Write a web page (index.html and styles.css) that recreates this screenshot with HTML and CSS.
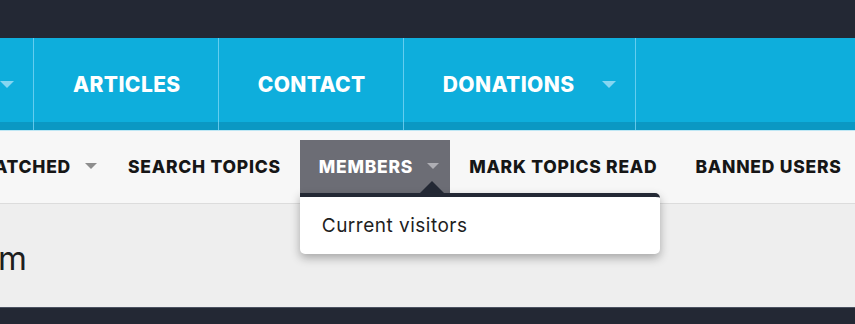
FILE: index.html
```html
<!DOCTYPE html>
<html lang="en">
<head>
<meta charset="utf-8">
<title>Forum</title>
<link rel="stylesheet" href="styles.css">
</head>
<body>
<div class="topbar"></div>
<nav class="mainnav">
  <div class="mainnav-item first"><span class="mainnav-label">FORUMS</span><span class="caret caret-blue"></span></div>
  <div class="mainnav-item"><span class="mainnav-label">ARTICLES</span></div>
  <div class="mainnav-item"><span class="mainnav-label">CONTACT</span></div>
  <div class="mainnav-item"><span class="mainnav-label">DONATIONS</span><span class="caret caret-blue"></span></div>
</nav>
<nav class="subnav">
  <div class="subnav-item first"><span>WATCHED</span><span class="caret caret-grey"></span></div>
  <div class="subnav-item"><span>SEARCH TOPICS</span></div>
  <div class="subnav-item active"><span>MEMBERS</span><span class="caret caret-light"></span>
    <div class="dropdown">
      <span class="dropdown-pointer"></span>
      <div class="dropdown-body"><span class="dropdown-link">Current visitors</span></div>
    </div>
  </div>
  <div class="subnav-item"><span>MARK TOPICS READ</span></div>
  <div class="subnav-item"><span>BANNED USERS</span></div>
</nav>
<main class="content">
  <div class="title-wrap"><h1 class="page-title">Forum</h1></div>
</main>
<footer class="footer"></footer>
</body>
</html>
```

FILE: styles.css
```css
* { box-sizing: border-box; }
html, body { margin: 0; padding: 0; }
body {
  width: 855px;
  height: 324px;
  overflow: hidden;
  background: #232834;
  font-family: "Inter", "Noto Sans", sans-serif;
}

.topbar {
  height: 38px;
  background: #232834;
}

.mainnav {
  display: flex;
  height: 92px;
  background: linear-gradient(to bottom, #0eaedc 0, #0eaedc 84px, #0b98c3 84px, #0b98c3 92px);
}
.mainnav-item {
  display: flex;
  align-items: center;
  height: 92px;
  padding: 0 19px 0 39px;
  border-right: 1px solid rgba(130, 215, 245, 0.75);
  color: #ffffff;
  font-weight: 800;
  font-size: 21px;
  letter-spacing: 0.4px;
  white-space: nowrap;
}
.mainnav-item.first {
  width: 34px;
  flex: 0 0 34px;
  justify-content: flex-end;
  padding: 0 19px 0 0;
}
.mainnav-item .mainnav-label + .caret { margin-left: 28px; }
.mainnav-item:not(.first):not(:last-child) { padding-right: 37px; }

.caret {
  display: inline-block;
  width: 0;
  height: 0;
  flex: 0 0 auto;
}
.caret-blue {
  border-left: 7.5px solid transparent;
  border-right: 7.5px solid transparent;
  border-top: 7px solid #86d6f1;
}
.caret-grey {
  border-left: 6px solid transparent;
  border-right: 6px solid transparent;
  border-top: 6px solid #8e8e8e;
}
.caret-light {
  border-left: 6.5px solid transparent;
  border-right: 6.5px solid transparent;
  border-top: 6px solid #aeaeb4;
}

.subnav {
  display: flex;
  align-items: center;
  height: 74px;
  padding: 9px 0 11px;
  background: #f7f7f7;
  border-top: 1px solid #bfe7f4;
  border-bottom: 1px solid #dcdcdc;
}
.subnav-item {
  position: relative;
  display: flex;
  align-items: center;
  height: 53px;
  padding: 0 19px;
  color: #161616;
  font-weight: 800;
  font-size: 17.5px;
  letter-spacing: 0.75px;
  white-space: nowrap;
}
.subnav-item .caret { margin-left: 14px; }
.subnav-item.first,
.subnav-item.active { padding-right: 11px; }
.subnav-item.first {
  width: 109px;
  flex: 0 0 109px;
  justify-content: flex-end;
  padding-left: 0;
  padding-right: 12px;
}
.subnav-item.active {
  background: #6c6d75;
  color: #ffffff;
}

.dropdown {
  position: absolute;
  left: 0;
  top: 53px;
  width: 360px;
  z-index: 5;
}
.dropdown-pointer {
  position: absolute;
  left: 120px;
  top: -12px;
  width: 0;
  height: 0;
  border-left: 12px solid transparent;
  border-right: 12px solid transparent;
  border-bottom: 12px solid #232834;
}
.dropdown-body {
  display: flex;
  align-items: center;
  height: 61px;
  padding: 0 22px;
  background: #ffffff;
  border-top: 4px solid #232834;
  border-radius: 5px;
  border-top-left-radius: 0;
  box-shadow: 0 4px 10px rgba(0, 0, 0, 0.3);
}
.dropdown-link {
  color: #1e1e1e;
  font-weight: 400;
  font-size: 19px;
  letter-spacing: 0.5px;
}

.content {
  height: 103px;
  background: #eeeeee;
  padding-top: 34px;
}
.title-wrap {
  width: 27px;
  display: flex;
  justify-content: flex-end;
  white-space: nowrap;
}
.page-title {
  margin: 0;
  font-weight: 400;
  font-size: 33px;
  line-height: 40px;
  color: #1e1e1e;
}

.footer {
  height: 17px;
  background: #232834;
  border-top: 1px solid #4b5262;
}
```
